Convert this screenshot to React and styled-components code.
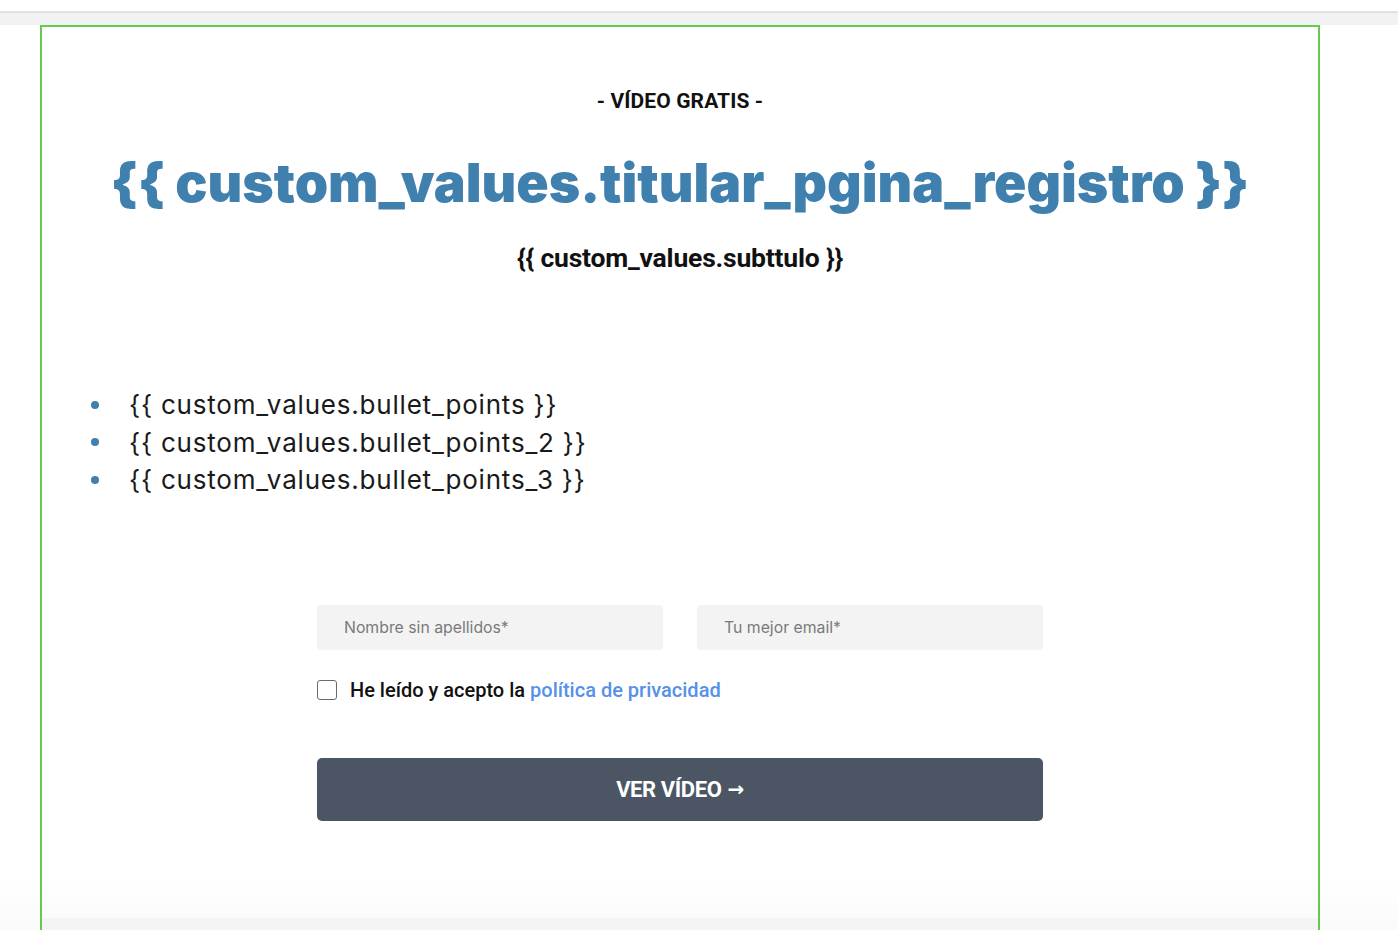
import React from 'react'
import styled, { createGlobalStyle } from 'styled-components'

const GlobalStyle = createGlobalStyle`
  html, body {
    margin: 0;
    padding: 0;
    background: #ffffff;
  }
  body {
    font-family: Roboto, "Liberation Sans", sans-serif;
    overflow: hidden;
  }
`

const bullets = [
  '{{ custom_values.bullet_points }}',
  '{{ custom_values.bullet_points_2 }}',
  '{{ custom_values.bullet_points_3 }}',
]

function App() {
  return (
    <Page>
      <GlobalStyle />
      <TopStrip />
      <Stage>
        <Frame>
          <Hero>
            <Eyebrow>- VÍDEO GRATIS -</Eyebrow>
            <Title>{'{{ custom_values.titular_pgina_registro }}'}</Title>
            <Subtitle>{'{{ custom_values.subttulo }}'}</Subtitle>

            <BulletList>
              {bullets.map((b) => (
                <BulletItem key={b}>
                  <Dot />
                  <span>{b}</span>
                </BulletItem>
              ))}
            </BulletList>

            <Form onSubmit={(e) => e.preventDefault()}>
              <Fields>
                <Input placeholder="Nombre sin apellidos*" />
                <Input placeholder="Tu mejor email*" />
              </Fields>
              <Consent>
                <Check type="checkbox" />
                <span>
                  He leído y acepto la <a href="#">política de privacidad</a>
                </span>
              </Consent>
              <Submit type="submit">
                VER VÍDEO <Arrow>→</Arrow>
              </Submit>
            </Form>
          </Hero>
          <NextSection />
        </Frame>
      </Stage>
    </Page>
  )
}

export default App

const Page = styled.div`
  width: 1398px;
  height: 930px;
  overflow: hidden;
  display: flex;
  flex-direction: column;
  background: linear-gradient(to bottom, #ffffff 0, #ffffff 880px, #fafafa 930px);
`

const TopStrip = styled.div`
  margin-top: 11px;
  height: 12px;
  border-top: 2px solid #dfe0e3;
  background: #f1f2f4;
  flex-shrink: 0;
`

const Stage = styled.div`
  flex: 1;
  display: flex;
  padding-left: 40px;
`

const Frame = styled.div`
  width: 1276px;
  border: 2px solid #65c94f;
  border-bottom: none;
  display: flex;
  flex-direction: column;
  background: #ffffff;
`

const Hero = styled.section`
  height: 891px;
  display: flex;
  flex-direction: column;
  align-items: center;
  background: linear-gradient(to bottom, #ffffff 0, #ffffff 850px, #fbfbfb 891px);
`

const NextSection = styled.div`
  flex: 1;
  background: #f4f4f4;
`

const Eyebrow = styled.p`
  margin: 62px 0 0;
  font-family: Roboto, sans-serif;
  font-weight: 700;
  font-size: 21px;
  line-height: 24px;
  color: #111111;
  letter-spacing: 0.1px;
`

const Title = styled.h1`
  margin: 37px 0 0;
  font-family: Inter, "Noto Sans", sans-serif;
  font-weight: 900;
  font-size: 53.5px;
  line-height: 65px;
  color: #3f80ae;
  white-space: nowrap;
`

const Subtitle = styled.p`
  margin: 28px 0 0;
  font-family: Roboto, sans-serif;
  font-weight: 700;
  font-size: 26.5px;
  line-height: 30px;
  color: #111111;
  letter-spacing: -0.2px;
`

const BulletList = styled.ul`
  align-self: stretch;
  list-style: none;
  margin: 113px 0 0;
  padding: 0 0 0 49px;
`

const BulletItem = styled.li`
  display: flex;
  align-items: center;
  gap: 30px;
  height: 37.5px;
  font-family: Inter, "Noto Sans", sans-serif;
  font-weight: 400;
  font-size: 26px;
  letter-spacing: 0.8px;
  color: #1a1a1a;
`

const Dot = styled.i`
  width: 8px;
  height: 8px;
  border-radius: 50%;
  background: #3f80ae;
  flex-shrink: 0;
`

const Form = styled.form`
  width: 726px;
  margin-top: 106px;
  display: flex;
  flex-direction: column;
`

const Fields = styled.div`
  display: grid;
  grid-template-columns: 1fr 1fr;
  gap: 34px;
`

const Input = styled.input`
  height: 45px;
  box-sizing: border-box;
  border: none;
  border-radius: 4px;
  background: #f3f3f3;
  padding: 0 27px;
  font-family: Inter, sans-serif;
  font-size: 15.8px;
  color: #333;
  outline: none;

  &::placeholder {
    color: #7a7a7a;
  }
`

const Consent = styled.label`
  display: flex;
  align-items: center;
  gap: 13px;
  margin-top: 28px;
  height: 24px;
  font-family: Roboto, sans-serif;
  font-weight: 500;
  font-size: 20px;
  color: #111111;

  a {
    color: #5591e9;
    text-decoration: none;
  }
`

const Check = styled.input`
  appearance: none;
  width: 20px;
  height: 20px;
  margin: 0;
  box-sizing: border-box;
  border: 1.5px solid #6b6b6b;
  border-radius: 3px;
  background: #fff;
`

const Submit = styled.button`
  margin-top: 56px;
  height: 63px;
  border: none;
  border-radius: 5px;
  background: #4b5563;
  color: #ffffff;
  font-family: Roboto, sans-serif;
  font-weight: 700;
  font-size: 22px;
  letter-spacing: -0.4px;
  cursor: pointer;
  display: flex;
  align-items: center;
  justify-content: center;
  gap: 6px;
`

const Arrow = styled.span`
  font-family: "DejaVu Sans", sans-serif;
  font-weight: 700;
  font-size: 20px;
`
